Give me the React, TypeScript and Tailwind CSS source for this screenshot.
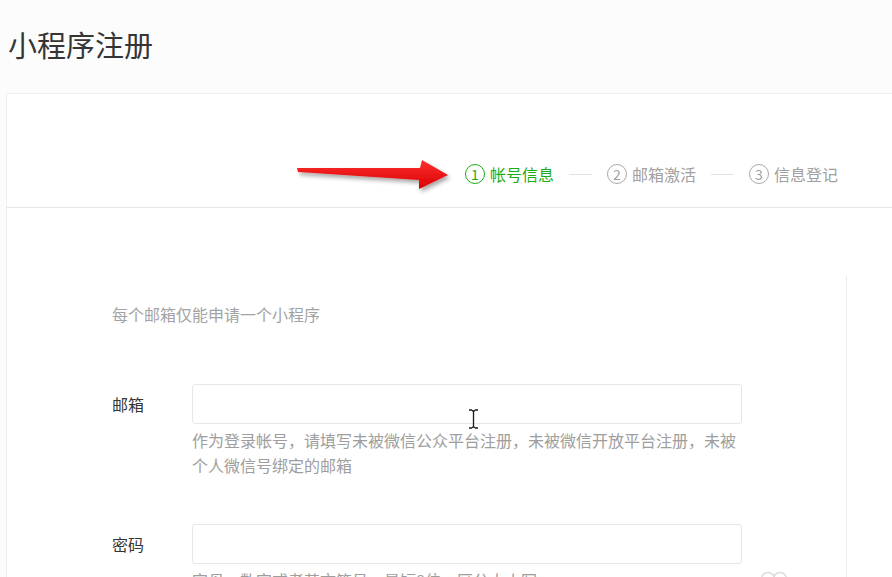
import React from "react";

const font = { fontFamily: '"Noto Sans CJK SC", "Noto Sans", sans-serif' };

function Step({ n, label, active }: { n: string; label: string; active?: boolean }) {
  return (
    <div className={`flex items-center gap-[5px] ${active ? "text-[#1aad19]" : "text-[#a0a0a0]"}`}>
      <span
        className={`flex h-[20px] w-[20px] items-center justify-center rounded-full border-[1.5px] text-[14px] leading-none ${
          active ? "border-[#1aad19]" : "border-[#a8a8a8]"
        }`}
      >
        {n}
      </span>
      <span className="text-[16px] leading-[20px]">{label}</span>
    </div>
  );
}

function Divider() {
  return <div className="mx-[15px] h-px w-[23px] bg-[#e2e2e2]" />;
}

export default function App() {
  return (
    <div style={font} className="relative h-[577px] w-[892px] overflow-hidden bg-[#fcfcfc] text-[#353535]">
      <h1 className="ml-[8px] mt-[24px] h-[40px] text-[29px] font-normal leading-[40px] text-[#353535]">小程序注册</h1>

      <div className="ml-[6px] mt-[29px] border-l border-t border-[#efefef] bg-white">
        {/* steps header */}
        <div className="relative flex h-[114px] items-start justify-end border-b border-[#e6e6e6] pr-[54px] pt-[70px]">
          <Step n="1" label="帐号信息" active />
          <div className="flex h-[20px] items-center">
            <Divider />
          </div>
          <Step n="2" label="邮箱激活" />
          <div className="flex h-[20px] items-center">
            <Divider />
          </div>
          <Step n="3" label="信息登记" />
        </div>

        {/* body */}
        <div className="pt-[68px]">
          <div className="w-[840px] border-r border-[#ebebeb] pb-[40px] pl-[105px] pt-[26px]">
            <p className="text-[16px] leading-[24px] text-[#a3a3a3]">每个邮箱仅能申请一个小程序</p>

            <div className="mt-[58px]">
              <div className="flex items-center">
                <label className="w-[80px] text-[16px] leading-[24px] text-[#353535]">邮箱</label>
                <div className="h-[40px] w-[550px] rounded-[3px] border border-[#e7e7e7] bg-white" />
              </div>
              <p className="ml-[80px] mt-[4px] w-[550px] text-[16px] leading-[25px] text-[#9e9e9e]">
                作为登录帐号，请填写未被微信公众平台注册，未被微信开放平台注册，未被个人微信号绑定的邮箱
              </p>
            </div>

            <div className="mt-[46px]">
              <div className="relative flex items-center">
                <label className="w-[80px] text-[16px] leading-[24px] text-[#353535]">密码</label>
                <div className="h-[40px] w-[550px] rounded-[3px] border border-[#e7e7e7] bg-white" />
                <svg
                  className="absolute left-[648px] top-[47px]"
                  width="28"
                  height="16"
                  viewBox="0 0 28 16"
                  fill="none"
                  stroke="#dcdcdc"
                  strokeWidth="1.5"
                >
                  <circle cx="8" cy="8" r="6.5" />
                  <circle cx="20" cy="8" r="6.5" />
                </svg>
              </div>
              <p className="ml-[80px] mt-[4px] w-[550px] text-[16px] leading-[25px] text-[#9e9e9e]">
                字母、数字或者英文符号，最短8位，区分大小写
              </p>
            </div>
          </div>
        </div>
      </div>

      {/* red annotation arrow */}
      <svg className="pointer-events-none absolute left-0 top-0" width="892" height="577">
        <defs>
          <linearGradient id="arrowGrad" x1="0" y1="0" x2="0" y2="1">
            <stop offset="0" stopColor="#ff3030" />
            <stop offset="1" stopColor="#d80000" />
          </linearGradient>
          <filter id="arrowShadow" x="-10%" y="-50%" width="130%" height="200%">
            <feDropShadow dx="2" dy="3" stdDeviation="2" floodColor="#000" floodOpacity="0.35" />
          </filter>
        </defs>
        <path
          d="M297 168 L420 168 L422 160 L448 175 L419 189 L419 180 L298 172 Z"
          fill="url(#arrowGrad)"
          filter="url(#arrowShadow)"
        />
      </svg>

      {/* I-beam mouse cursor */}
      <svg className="pointer-events-none absolute left-[468px] top-[409px]" width="11" height="20" viewBox="0 0 11 20">
        <path d="M1 1 H4 M7 1 H10 M5.5 1.5 V18.5 M1 19 H4 M7 19 H10 M4 1.5 Q5.5 1.5 5.5 3 Q5.5 1.5 7 1.5 M4 18.5 Q5.5 18.5 5.5 17 Q5.5 18.5 7 18.5" stroke="#1a1a1a" strokeWidth="1.3" fill="none" />
      </svg>
    </div>
  );
}
